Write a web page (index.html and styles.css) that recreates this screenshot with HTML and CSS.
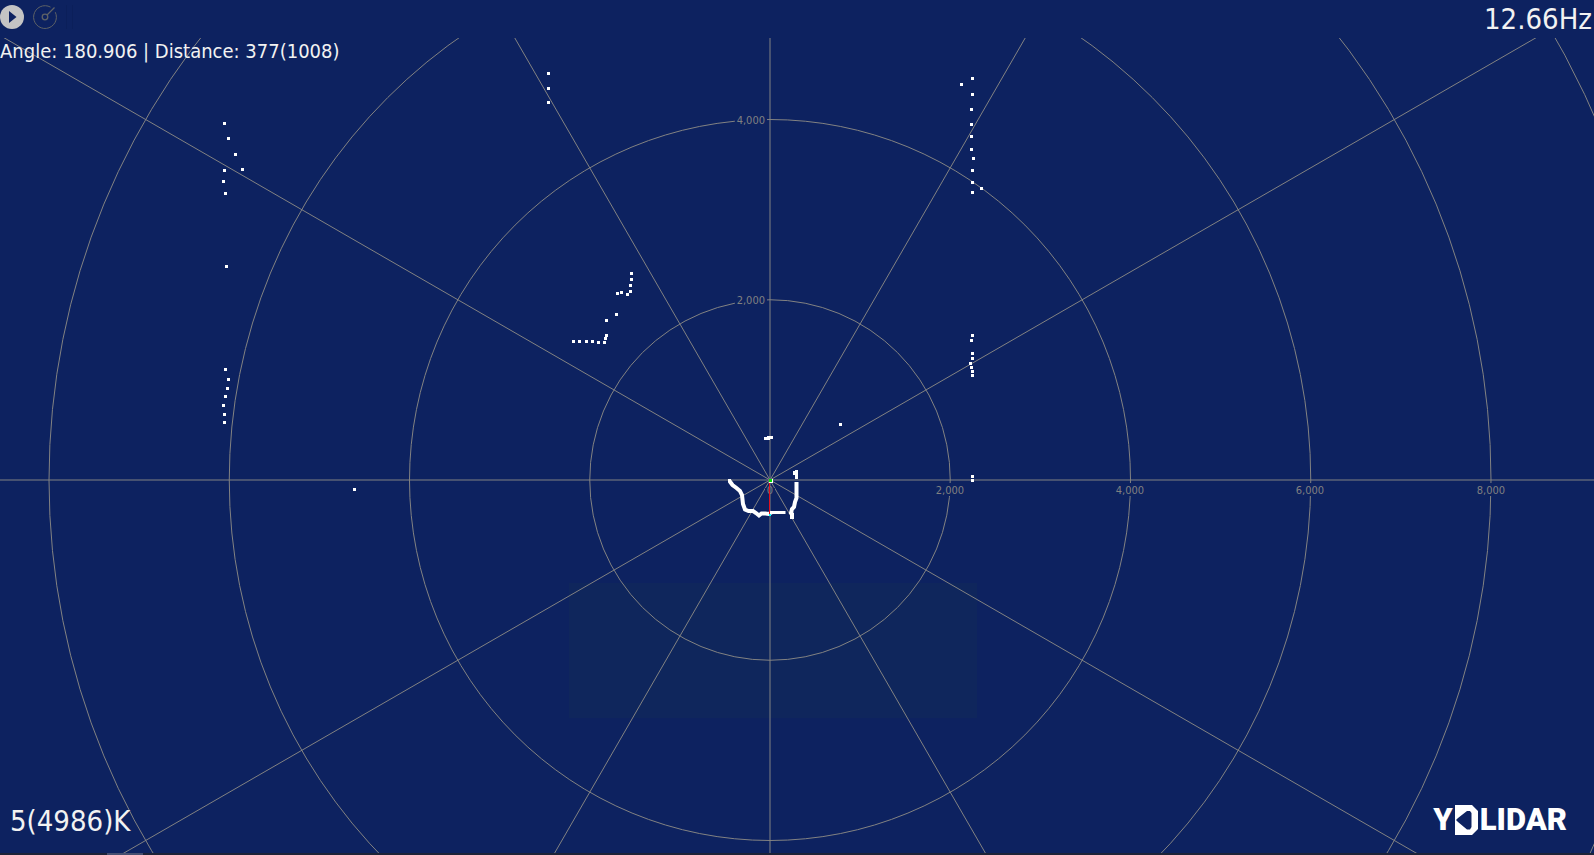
FILE: index.html
```html
<!DOCTYPE html>
<html lang="en">
<head>
<meta charset="utf-8">
<title>YDLIDAR Viewer</title>
<link rel="stylesheet" href="styles.css">
</head>
<body class="viewer">
<header class="toolbar">
  <button class="tool" type="button" aria-label="Start scan">
    <svg class="tool-icon" viewBox="0 0 24 24"><circle cx="12" cy="12" r="12" fill="#c4c4c4"/><path d="M9 6v12l7.500-6z" fill="#0d2260"/></svg>
  </button>
  <button class="tool" type="button" aria-label="Scan frequency">
    <svg class="tool-icon" viewBox="0 0 24 24" fill="none" stroke="#5e6266"><path d="M17.500 2.100A11.400 11.400 0 1 0 22.300 7.200"/><circle cx="12" cy="12" r="2.800" stroke-width="1.300"/><path d="M14 10l7.500-7.500" stroke-width="1.300"/></svg>
  </button>
  <span class="divider"></span>
  <span class="divider"></span>
  <output class="frequency">12.66Hz</output>
</header>
<main class="stage">
  <svg class="plot" viewBox="0 38 1594 815" preserveAspectRatio="xMidYMid slice" role="img" aria-label="Lidar scan">
    <rect class="shade" x="569" y="583" width="408" height="135"/>
    <g class="rings">
      <circle cx="770" cy="480" r="180.250"/>
      <circle cx="770" cy="480" r="360.500"/>
      <circle cx="770" cy="480" r="540.750"/>
      <circle cx="770" cy="480" r="721"/>
      <circle cx="770" cy="480" r="901.250"/>
    </g>
    <g class="gaps">
      <rect x="735" y="112" width="32" height="15"/>
      <rect x="735" y="292" width="32" height="15"/>
      <rect x="934" y="483" width="32" height="13"/>
      <rect x="1114" y="483" width="32" height="13"/>
      <rect x="1294" y="483" width="32" height="13"/>
      <rect x="1475" y="483" width="32" height="13"/>
    </g>
    <g class="spokes">
      <path d="M-400 480H1940M770 -400V1400"/>
      <path d="M-96 980L1636 -20M-96 -20L1636 980M270 1346L1270 -386M270 -386L1270 1346"/>
    </g>
    <rect class="gap" x="765" y="488" width="4" height="9"/>
    <rect class="gap" x="771" y="488" width="4" height="9"/>
    <g class="labels">
      <text class="label-end" x="765" y="124">4,000</text>
      <text class="label-end" x="765" y="304">2,000</text>
      <text x="770" y="494">0</text>
      <text x="950" y="494">2,000</text>
      <text x="1130" y="494">4,000</text>
      <text x="1310" y="494">6,000</text>
      <text x="1491" y="494">8,000</text>
    </g>
    <path class="points" d="M224.500 123.500h0M228.500 138.500h0M235.500 154.500h0M242.500 169.500h0M224.500 170.500h0M223.500 181.500h0M225.500 193.500h0M226.500 266.500h0M225.500 369.500h0M228.500 379.500h0M227.500 388.500h0M225.500 396.500h0M223.500 405.500h0M224.500 414.500h0M224.500 422.500h0M354.500 489.500h0
      M972.500 78.500h0M961.500 84.500h0M972.500 94.500h0M971.500 109.500h0M971.500 124.500h0M971.500 136.500h0M971.500 149.500h0M973.500 158.500h0M972.500 170.500h0M972.500 182.500h0M981.500 188.500h0M972.500 192.500h0
      M972.500 335.500h0M971.500 340.500h0M972.500 353.500h0M972.500 358.500h0M970.500 363.500h0M971.500 367.500h0M972.500 371.500h0M972.500 375.500h0M972.500 476.500h0M972.500 480.500h0M840.500 424.500h0
      M548.500 73.500h0M548.500 88.500h0M548.500 102.500h0
      M631.500 273.500h0M631.500 279.500h0M630.500 285.500h0M630.500 291.500h0M627.500 294.500h0M621.500 292.500h0M617.500 293.500h0M616.500 314.500h0M606.500 320.500h0M606.500 335.500h0M605.500 338.500h0M604.500 342.500h0M598.500 342.500h0M592.500 341.500h0M586.500 341.500h0M579.500 341.500h0M573.500 341.500h0
      M765.500 438.500h3M768.500 437.500h3M772 512.500h12M796.500 471.500v6M794.500 472.500v1M729.500 480.500h0"/>
    <path class="points wall" d="M796.500 482v16l-1.500 4-1 5-2 2-1 4 1 1v5
      M729.500 481l3 4 4 3 3.500 3 2 4 1 9 2 5.500 3.500 1.500h4.500l3 2 3 2.500 2.500-2h4l3 .5 3-1.500"/>
    <path class="heading" d="M769.500 483V514"/>
    <rect x="769" y="479" width="4" height="4" fill="#fff"/>
    <rect x="769" y="479" width="3" height="3" fill="#00e000"/>
    <rect x="769" y="514" width="2" height="2" fill="#00ffff"/>
  </svg>
  <output class="cursor">Angle: 180.906 | Distance: 377(1008)</output>
  <div class="overlay">
    <output class="rate">5(4986)K</output>
    <div class="brand">
      <span>Y</span>
      <svg class="brand-mark" viewBox="0 0 23 30" role="img" aria-label="D"><path fill="#fff" fill-rule="evenodd" d="M0 0H17L23 6V24L17 30H0zM1 15L3 17L12 24.500H15L16.500 22V8L15 6H12L3 13z"/></svg>
      <span>LIDAR</span>
    </div>
  </div>
</main>
<footer class="strip"><span class="strip-thumb"></span></footer>
</body>
</html>
```
FILE: styles.css
```css
.viewer {
  margin: 0;
  height: 100vh;
  display: flex;
  flex-direction: column;
  overflow: hidden;
  background: #0d2260;
  color: #f2f2f2;
  font-family: "DejaVu Sans Condensed", "Noto Sans", "Open Sans", sans-serif;
}

.toolbar {
  flex: none;
  height: 38px;
  display: flex;
  align-items: center;
  box-sizing: border-box;
  padding: 0 2px 4px 0;
}

.tool {
  width: 24px;
  height: 24px;
  margin-right: 9px;
  padding: 0;
  border: 0;
  background: none;
}

.tool-icon {
  display: block;
  width: 24px;
  height: 24px;
}

.divider {
  width: 1px;
  height: 24px;
  margin-right: 5px;
  background: #0b1f5a;
}

.frequency {
  margin-left: auto;
  padding-top: 4px;
  font-size: 29px;
  line-height: 36px;
}

.stage {
  position: relative;
  flex: 1;
  min-height: 0;
  overflow: hidden;
}

.plot {
  display: block;
  width: 100%;
  height: 100%;
}

.shade {
  fill: #0f265c;
}

.rings,
.spokes {
  fill: none;
  stroke: #828282;
  stroke-width: 1;
}

.gaps,
.gap {
  fill: #0d2260;
}

.labels {
  fill: #808080;
  font-size: 11px;
  text-anchor: middle;
}

.label-end {
  text-anchor: end;
}

.points {
  fill: none;
  stroke: #fff;
  stroke-width: 3;
  stroke-linecap: square;
}

.wall {
  stroke-width: 4;
  stroke-linecap: butt;
}

.heading {
  stroke: #e0101c;
  stroke-width: 1;
}

.cursor {
  position: absolute;
  top: 0;
  left: 0;
  font-size: 20px;
  line-height: 26px;
}

.overlay {
  position: absolute;
  left: 0;
  right: 0;
  bottom: 0;
  display: flex;
  align-items: center;
  justify-content: space-between;
  padding: 0 27px 14px 10px;
}

.rate {
  padding-top: 2px;
  font-size: 29px;
  line-height: 36px;
}

.brand {
  display: flex;
  align-items: center;
  gap: 2px;
  color: #fff;
  font-family: Roboto, sans-serif;
  font-size: 31px;
  font-weight: 900;
  line-height: 36px;
}

.brand-mark {
  width: 23px;
  height: 30px;
}

.strip {
  flex: none;
  height: 2px;
  background: #1c2338;
}

.strip-thumb {
  display: block;
  width: 36px;
  height: 2px;
  margin-left: 107px;
  background: #454f70;
}
```
